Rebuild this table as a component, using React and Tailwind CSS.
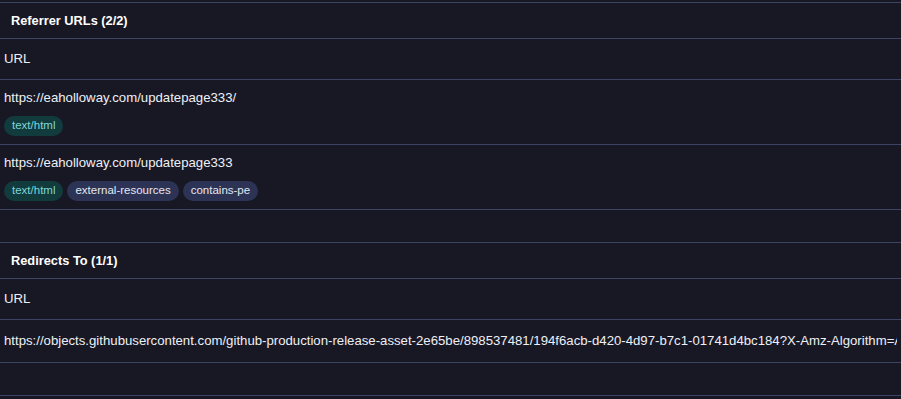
const sections = [
  {
    title: 'Referrer URLs (2/2)',
    rows: [
      { url: 'https://eaholloway.com/updatepage333/', tags: ['text/html'] },
      {
        url: 'https://eaholloway.com/updatepage333',
        tags: ['text/html', 'external-resources', 'contains-pe'],
      },
    ],
  },
  {
    title: 'Redirects To (1/1)',
    rows: [
      {
        url: 'https://objects.githubusercontent.com/github-production-release-asset-2e65be/898537481/194f6acb-d420-4d97-b7c1-01741d4bc184?X-Amz-Algorithm=AWS4-HMAC-SHA256&X-Amz-Credential=releaseassetproduction',
        tags: [],
      },
    ],
  },
]

const Tag = ({ name }) => (
  <span
    className={`inline-flex items-center h-5 px-2 rounded-full text-[11.5px] leading-none ${
      name === 'text/html' ? 'bg-[#113b3d] text-[#7fd6d6]' : 'bg-[#2c3354] text-[#e4e7f0]'
    }`}
  >
    {name}
  </span>
)

const Section = ({ title, rows }) => (
  <section className="border-t border-[#3b4463] mb-[32px]">
    <h3 className="px-[11px] h-[35px] flex items-center text-[12.8px] font-bold text-white">{title}</h3>
    <div className="border-t border-[#3b4463]">
      <div className="px-1 h-[41px] flex items-center border-b border-[#3b4463]">URL</div>
      {rows.map((row) => (
        <div
          key={row.url}
          className={`px-1 border-b border-[#3b4463] ${row.tags.length ? 'py-2' : 'h-[43px] flex items-center'}`}
        >
          <div className="leading-5 whitespace-nowrap overflow-hidden">{row.url}</div>
          {row.tags.length > 0 && (
            <div className="flex gap-1 mt-2">
              {row.tags.map((t) => (
                <Tag key={t} name={t} />
              ))}
            </div>
          )}
        </div>
      ))}
    </div>
  </section>
)

export default function App() {
  return (
    <div className="w-[901px] h-[399px] overflow-hidden bg-[#181824] text-[#eef0f6] text-[13.2px] font-['Liberation_Sans',Arial,sans-serif] pt-[2px]">
      {sections.map((s) => (
        <Section key={s.title} {...s} />
      ))}
      <div className="border-t border-[#3b4463]" />
    </div>
  )
}
